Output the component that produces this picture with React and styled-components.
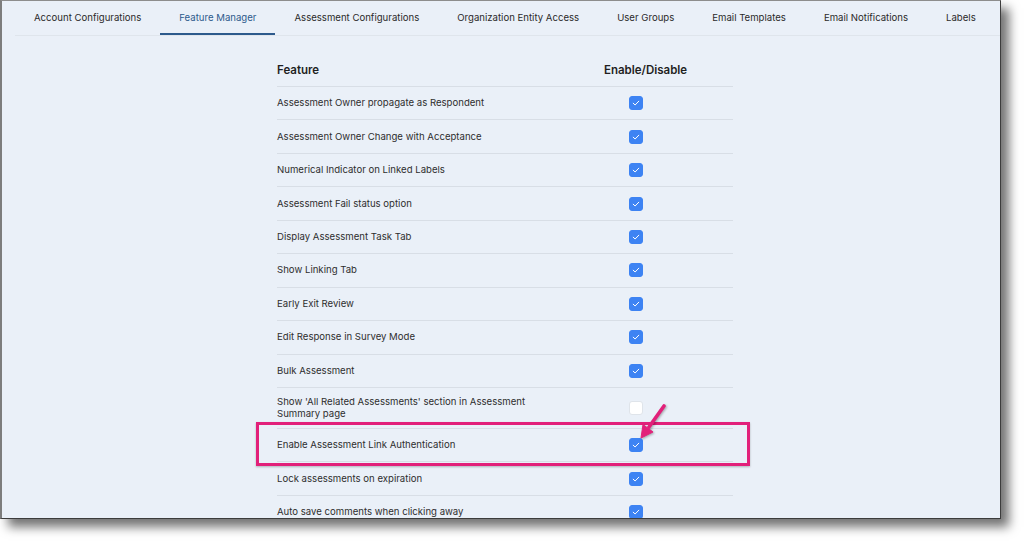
import React from 'react'
import styled, { createGlobalStyle } from 'styled-components'

const GlobalStyle = createGlobalStyle`
  body {
    margin: 0;
    background-color: #ffffff;
    font-family: Inter, "Liberation Sans", sans-serif;
  }
`

const Page = styled.div`
  width: 1024px;
  height: 541px;
  overflow: hidden;
`

const Frame = styled.div`
  width: 998px;
  height: 517px;
  background-color: #eaf0f8;
  border-top: 1px solid #8d8d8d;
  border-left: 2px solid #7d7d7d;
  border-right: 1px solid #3c3c3c;
  border-bottom: 1px solid #3c3c3c;
  box-shadow: 8px 8px 10px rgba(0, 0, 0, 0.55);
  overflow: hidden;
`

const TabBar = styled.div`
  display: flex;
  margin: 0 0 0 13px;
  border-bottom: 1px solid #dfe5ec;
`

const Tab = styled.div`
  height: 32px;
  display: flex;
  align-items: center;
  padding: 0 19px;
  font-size: 9.6px;
  color: ${p => (p.active ? '#2d5a8c' : '#2a2a2a')};
  border-bottom: 2px solid ${p => (p.active ? '#2d5a8c' : 'transparent')};
  white-space: nowrap;
`

const Content = styled.div`
  padding: 17px 0 0 275px;
`

const Table = styled.div`
  width: 456px;
`

const HeaderRow = styled.div`
  display: grid;
  grid-template-columns: 327px 1fr;
  align-items: center;
  height: 33px;
  border-bottom: 1px solid #d8dee6;
  font-size: 11.5px;
  font-weight: 600;
  color: #1f1f1f;
`

const Row = styled.div`
  position: relative;
  display: grid;
  grid-template-columns: 327px 1fr;
  align-items: center;
  min-height: 32.45px;
  border-bottom: 1px solid #d8dee6;
`

const Label = styled.div`
  font-size: 9.6px;
  line-height: 12px;
  color: #2e2e2e;
  padding: 8px 0;
  max-width: 262px;
`

const Box = styled.div`
  width: 14px;
  height: 14px;
  margin-left: 25px;
  border-radius: 3px;
  background-color: ${p => (p.checked ? '#3d83f3' : '#ffffff')};
  border: 1px solid ${p => (p.checked ? '#3d83f3' : '#dfe4ea')};
  box-sizing: border-box;
  display: flex;
  align-items: center;
  justify-content: center;
`

const Highlight = styled.div`
  position: absolute;
  left: -21px;
  right: -17px;
  top: -7px;
  bottom: -5px;
  border: 3px solid #e2207a;
  box-shadow: 0 1px 2px rgba(0, 0, 0, 0.25);
  pointer-events: none;
`

const Arrow = styled.svg`
  position: absolute;
  left: 355px;
  top: -28px;
  overflow: visible;
  filter: drop-shadow(1px 1px 1px rgba(0, 0, 0, 0.3));
`

const tabs = [
  'Account Configurations',
  'Feature Manager',
  'Assessment Configurations',
  'Organization Entity Access',
  'User Groups',
  'Email Templates',
  'Email Notifications',
  'Labels',
]

const features = [
  { name: 'Assessment Owner propagate as Respondent', on: true },
  { name: 'Assessment Owner Change with Acceptance', on: true },
  { name: 'Numerical Indicator on Linked Labels', on: true },
  { name: 'Assessment Fail status option', on: true },
  { name: 'Display Assessment Task Tab', on: true },
  { name: 'Show Linking Tab', on: true },
  { name: 'Early Exit Review', on: true },
  { name: 'Edit Response in Survey Mode', on: true },
  { name: 'Bulk Assessment', on: true },
  { name: "Show 'All Related Assessments' section in Assessment Summary page", on: false },
  { name: 'Enable Assessment Link Authentication', on: true, marked: true },
  { name: 'Lock assessments on expiration', on: true },
  { name: 'Auto save comments when clicking away', on: true },
]

const Checkbox = ({ checked }) => (
  <Box checked={checked}>
    {checked && (
      <svg width="10" height="10" viewBox="0 0 10 10">
        <path d="M2.2 5.2 L4.1 7 L7.8 3.2" fill="none" stroke="#ffffff" strokeWidth="1" strokeLinecap="round" strokeLinejoin="round" />
      </svg>
    )}
  </Box>
)

export default function App() {
  return (
    <>
      <GlobalStyle />
      <Page>
        <Frame>
          <TabBar>
            {tabs.map(t => (
              <Tab key={t} active={t === 'Feature Manager'}>{t}</Tab>
            ))}
          </TabBar>
          <Content>
            <Table>
              <HeaderRow>
                <div>Feature</div>
                <div>Enable/Disable</div>
              </HeaderRow>
              {features.map(f => (
                <Row key={f.name}>
                  <Label>{f.name}</Label>
                  <Checkbox checked={f.on} />
                  {f.marked && (
                    <>
                      <Highlight />
                      <Arrow width="34" height="40" viewBox="0 0 34 40">
                        <path d="M32 5 L17 26" stroke="#e2207a" strokeWidth="3.6" strokeLinecap="round" fill="none" />
                        <path d="M9 37 L21 31 L11 23.5 Z" fill="#e2207a" stroke="#e2207a" strokeWidth="1" strokeLinejoin="round" />
                      </Arrow>
                    </>
                  )}
                </Row>
              ))}
            </Table>
          </Content>
        </Frame>
      </Page>
    </>
  )
}
